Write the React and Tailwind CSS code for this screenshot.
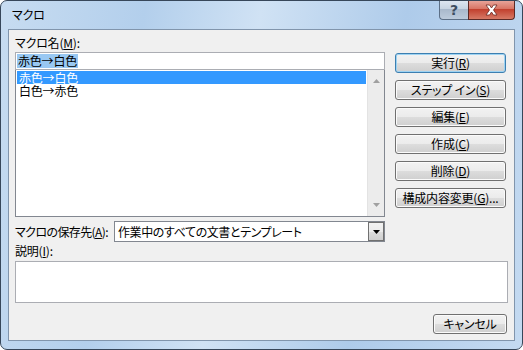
const btnBase =
  "h-[20px] flex items-center justify-center rounded-[3px] border text-[12px] leading-none text-black bg-[linear-gradient(#f2f2f2_0%,#ebebeb_50%,#dddddd_50%,#cfcfcf_100%)]";

const Btn = ({ children, primary, className = "" }) => (
  <div
    className={`${btnBase} ${
      primary
        ? "border-[#3c7fb1] shadow-[inset_0_0_0_1px_#9ed3f2]"
        : "border-[#707070] shadow-[inset_0_0_0_1px_#fbfbfb]"
    } ${className}`}
  >
    {children}
  </div>
);

const Arrow = ({ up, color = "#a0a0a0" }) => (
  <svg width="7" height="4" viewBox="0 0 7 4">
    {up ? (
      <path d="M3.5 0 L7 4 L0 4 Z" fill={color} />
    ) : (
      <path d="M0 0 L7 0 L3.5 4 Z" fill={color} />
    )}
  </svg>
);

const App = () => {
  return (
    <div className="w-[523px] h-[350px] bg-white font-['Noto_Sans_CJK_JP','Noto_Sans',sans-serif] [font-feature-settings:'palt'] text-[12px] tracking-[-0.2px] text-black">
      <div className="w-full h-full rounded-[7px] border border-[#37475a] bg-[linear-gradient(100deg,#c7dcf1_0%,#b3cfec_25%,#d0e2f4_45%,#aecbea_70%,#c4daf1_100%)] flex flex-col overflow-hidden">
        {/* Title bar */}
        <div className="h-[28px] flex items-start justify-between">
          <div className="pl-[11px] pt-[6px] leading-[16px] text-[12px]">マクロ</div>
          <div className="flex -mt-px mr-[7px]">
            <div className="w-[29px] h-[20px] rounded-bl-[4px] border border-[#5c6f86] border-t-0 border-r-0 bg-[linear-gradient(#dfe8f2_0%,#c6d3e1_50%,#a9b9cc_50%,#bccbdc_100%)] flex items-center justify-center">
              <span className="text-[14px] font-bold leading-none text-[#3d4d60] font-['DejaVu_Sans',sans-serif]">?</span>
            </div>
            <div className="w-[47px] h-[20px] rounded-br-[4px] border border-[#5c2a26] border-t-0 bg-[linear-gradient(#e9a99f_0%,#d7705f_50%,#c2412f_50%,#d77a66_100%)] flex items-center justify-center">
              <svg width="15" height="12" viewBox="0 0 15 12">
                <path
                  d="M2 1 L5.5 1 L7.5 4 L9.5 1 L13 1 L9.5 6 L13 11 L9.5 11 L7.5 8 L5.5 11 L2 11 L5.5 6 Z"
                  fill="white"
                  stroke="#6b2a22"
                  strokeWidth="0.8"
                />
              </svg>
            </div>
          </div>
        </div>

        {/* Client area */}
        <div className="flex-1 mx-[7px] mb-[8px] border border-[#8195ac] bg-[#f0f0f0] flex flex-col px-[6px] pt-[4px]">
          <div className="flex">
            {/* Left column */}
            <div className="w-[370px] flex flex-col">
              <div className="h-[18px] leading-[18px]">
                マクロ名(<u>M</u>):
              </div>
              <div className="h-[18px] border border-[#abadb3] bg-white flex items-center pl-[1px]">
                <span className="bg-[#99c8f2] px-[1px] leading-[14px] text-[12px]">赤色→白色</span>
              </div>
              <div className="h-[147px] border border-[#828790] border-t-0 bg-white flex">
                <div className="flex-1 pt-[1px] pl-[1px] pr-[1px]">
                  <div className="h-[13px] leading-[13px] bg-[#3399ff] text-white pl-[2px]">赤色→白色</div>
                  <div className="h-[13px] leading-[13px] pl-[2px]">白色→赤色</div>
                </div>
                <div className="w-[17px] bg-[#ececec] border-l border-[#e3e3e3] flex flex-col items-center justify-between py-[9px]">
                  <Arrow up />
                  <Arrow />
                </div>
              </div>
              <div className="mt-[4px] flex items-center h-[21px]">
                <div className="w-[99px] shrink-0 whitespace-nowrap leading-[21px] tracking-[-0.6px]">
                  マクロの保存先(<u>A</u>):
                </div>
                <div className="flex-1 h-[21px] border border-[#828790] bg-white flex items-center">
                  <div className="flex-1 pl-[3px] leading-[19px] tracking-[-0.4px] whitespace-nowrap">
                    作業中のすべての文書とテンプレート
                  </div>
                  <div className="w-[16px] h-[19px] border border-[#707070] bg-[linear-gradient(#f2f2f2_0%,#ebebeb_50%,#dddddd_50%,#cfcfcf_100%)] flex items-center justify-center">
                    <Arrow color="#000" />
                  </div>
                </div>
              </div>
            </div>

            {/* Right column */}
            <div className="ml-[10px] w-[111px] flex flex-col gap-[7px] pt-[19px]">
              <Btn primary>
                実行(<u>R</u>)
              </Btn>
              <Btn>
                ステップ イン(<u>S</u>)
              </Btn>
              <Btn>
                編集(<u>E</u>)
              </Btn>
              <Btn>
                作成(<u>C</u>)
              </Btn>
              <Btn>
                削除(<u>D</u>)
              </Btn>
              <Btn>
                構成内容変更(<u>G</u>)...
              </Btn>
            </div>
          </div>

          <div className="mt-[2px] h-[14px] leading-[14px]">
            説明(<u>I</u>):
          </div>
          <div className="mt-[3px] h-[42px] w-[493px] border border-[#abadb3] bg-white" />

          <div className="mt-[11px] flex justify-end pr-[1px]">
            <Btn className="w-[74px]">キャンセル</Btn>
          </div>
        </div>
      </div>
    </div>
  );
};

export default App;
